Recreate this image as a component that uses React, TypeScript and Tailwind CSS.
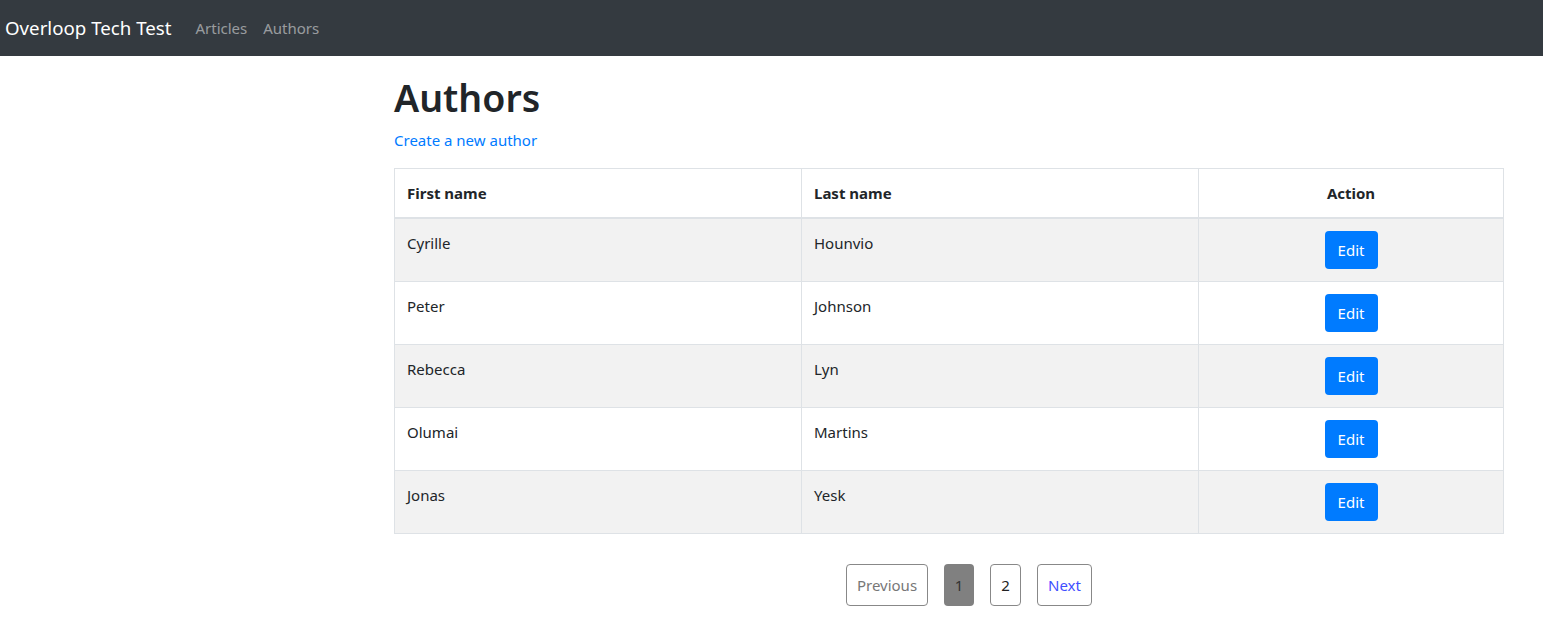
const authors = [
  { first: "Cyrille", last: "Hounvio" },
  { first: "Peter", last: "Johnson" },
  { first: "Rebecca", last: "Lyn" },
  { first: "Olumai", last: "Martins" },
  { first: "Jonas", last: "Yesk" },
]

const font = { fontFamily: '"Noto Sans", "Open Sans", sans-serif' }

export default function App() {
  return (
    <div className="min-h-screen bg-white text-[15px] text-[#212529]" style={font}>
      <nav className="flex h-14 items-center bg-[#343a40] px-[5px]">
        <a className="mr-6 text-[18.7px] text-white">Overloop Tech Test</a>
        <a className="mr-4 text-[15px] text-white/50">Articles</a>
        <a className="text-[15px] text-white/50">Authors</a>
      </nav>

      <div className="ml-[394px] w-[1110px] pt-[18px]">
        <h1 className="text-[37.5px] leading-[48px] font-semibold">Authors</h1>
        <a className="mt-[6px] block leading-6 text-[#007bff]">Create a new author</a>

        <table className="mt-[16px] w-full border-collapse border border-[#dee2e6]">
          <thead>
            <tr>
              <th className="w-[407px] border border-b-2 border-[#dee2e6] px-3 py-3 text-left leading-6 font-bold">First name</th>
              <th className="w-[397px] border border-b-2 border-[#dee2e6] px-3 py-3 text-left leading-6 font-bold">Last name</th>
              <th className="border border-b-2 border-[#dee2e6] px-3 py-3 text-center leading-6 font-bold">Action</th>
            </tr>
          </thead>
          <tbody>
            {authors.map((a, i) => (
              <tr key={a.first} className={i % 2 === 0 ? "bg-[#f2f2f2]" : "bg-white"}>
                <td className="border border-[#dee2e6] px-3 pt-3 pb-[26px] align-top leading-6">{a.first}</td>
                <td className="border border-[#dee2e6] px-3 pt-3 pb-[26px] align-top leading-6">{a.last}</td>
                <td className="border border-[#dee2e6] px-3 py-3 text-center align-top">
                  <button className="h-[38px] w-[53px] rounded bg-[#007bff] text-white">Edit</button>
                </td>
              </tr>
            ))}
          </tbody>
        </table>

        <div className="mt-[30px] flex gap-4 pl-[452px]">
          <button className="h-[42px] w-[82px] rounded border border-[#888] text-[#777]">Previous</button>
          <button className="h-[42px] w-[30px] rounded bg-[#808080] text-[#333]">1</button>
          <button className="h-[42px] w-[31px] rounded border border-[#888] text-[#222]">2</button>
          <button className="h-[42px] w-[55px] rounded border border-[#888] text-[#3f4fff]">Next</button>
        </div>
      </div>
    </div>
  )
}
